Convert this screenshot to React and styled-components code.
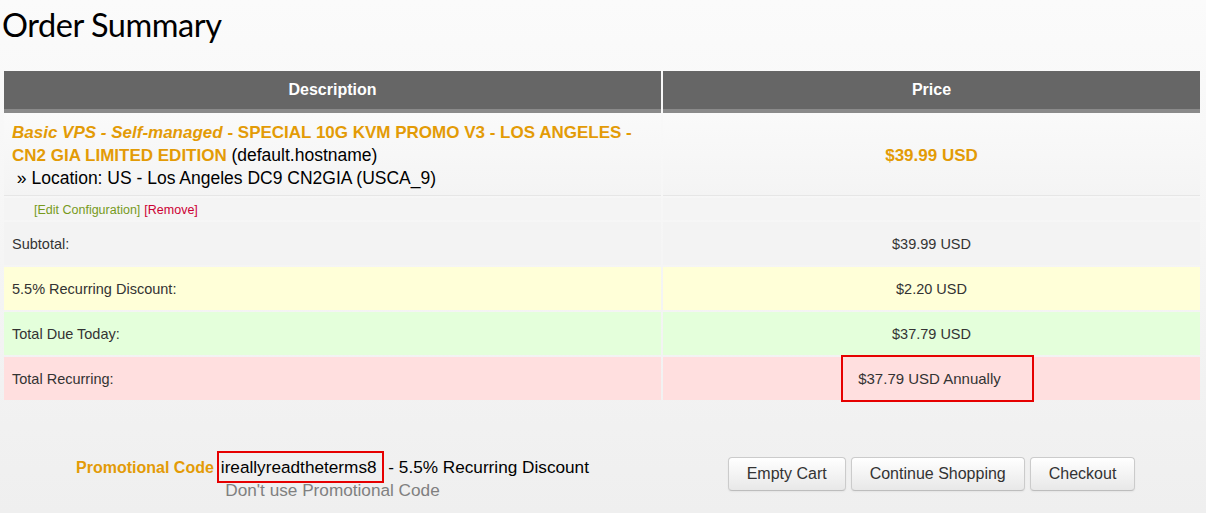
import React from 'react'
import styled, { createGlobalStyle } from 'styled-components'

const GlobalStyle = createGlobalStyle`
  html, body {
    margin: 0;
    min-height: 100%;
  }
  body {
    background: linear-gradient(#fbfbfb, #efefef) fixed;
    font-family: "Liberation Sans", Arial, sans-serif;
    color: #333;
  }
`;

const ORANGE = '#e39b06';

const tones = {
  item: 'linear-gradient(#fafafa, #f4f4f4)',
  plain: '#f4f4f4',
  sub: '#f3f3f3',
  discount: '#ffffd8',
  due: '#e4ffdb',
  recurring: '#ffdfdf',
};

const Page = styled.div`
  padding: 0 6px 0 4px;
`;

const Title = styled.h1`
  margin: 0 0 21px -2px;
  font-family: Lato, "Open Sans", sans-serif;
  font-weight: 400;
  font-size: 32.5px;
  letter-spacing: -0.45px;
  line-height: 50px;
  color: #000;
`;

const Row = styled.div`
  display: grid;
  grid-template-columns: 657px 537px;
  grid-template-rows: ${p => p.$h}px;
  column-gap: 2px;
`;

const HeadCell = styled.div`
  background: #666;
  border-bottom: 4px solid #8a8a8a;
  color: #fff;
  font-weight: bold;
  font-size: 16px;
  display: flex;
  align-items: center;
  justify-content: center;
`;

const Body = styled.div`
  display: flex;
  flex-direction: column;
  gap: 2px;
`;

const Cell = styled.div`
  min-height: 0;
  background: ${p => tones[p.$tone]};
  border-bottom: ${p => (p.$line ? '1px solid #e6e6e6' : 'none')};
  display: flex;
  align-items: center;
  justify-content: ${p => (p.$center ? 'center' : 'flex-start')};
  padding: ${p => p.$pad || '0 8px'};
  font-size: 14.5px;
  color: #333;
`;

const ItemText = styled.div`
  align-self: flex-start;
  font-size: 17px;
  line-height: 22px;
  color: #000;
`;

const Product = styled.span`
  color: ${ORANGE};
  font-weight: bold;
  em { font-style: italic; }
`;

const Plain = styled.span`
  font-size: 17.5px;
`;

const Price = styled.span`
  color: ${ORANGE};
  font-weight: bold;
  font-size: 17px;
`;

const SmallLink = styled.a`
  font-size: 12.5px;
  color: ${p => (p.$red ? '#cc0033' : '#779a1c')};
  text-decoration: none;
  margin-right: 4px;
`;

const Marked = styled.span`
  display: flex;
  align-items: center;
  flex-shrink: 0;
  box-sizing: border-box;
  height: 47px;
  margin-left: 12px;
  padding: 0 31px 0 15px;
  border: 2px solid #e60000;
  font-size: 15px;
`;

const Footer = styled.div`
  display: grid;
  grid-template-columns: 657px 537px;
  column-gap: 2px;
  margin-top: 56px;
`;

const Promo = styled.div`
  text-align: center;
  font-size: 17.2px;
  line-height: 23px;
  color: #000;
`;

const PromoLabel = styled.span`
  color: ${ORANGE};
  font-weight: bold;
  font-size: 16px;
`;

const Code = styled.span`
  margin-left: 3px;
  padding: 4px 5px 4px 2px;
  border: 2px solid #e60000;
`;

const Muted = styled.div`
  color: #808080;
`;

const Buttons = styled.div`
  display: flex;
  justify-content: center;
  gap: 5px;
  padding-top: 1px;
`;

const Button = styled.button`
  height: 34px;
  padding: 0 18px;
  border: 1px solid #cbcbcb;
  border-bottom-color: #bdbdbd;
  border-radius: 4px;
  background: linear-gradient(#ffffff, #e8e8e8);
  box-shadow: inset 0 1px 0 rgba(255, 255, 255, 0.4), 0 1px 2px rgba(0, 0, 0, 0.05);
  font-family: "Liberation Sans", Arial, sans-serif;
  font-size: 16px;
  color: #333;
  cursor: pointer;
`;

const totals = [
  { label: 'Subtotal:', value: '$39.99 USD', tone: 'sub' },
  { label: '5.5% Recurring Discount:', value: '$2.20 USD', tone: 'discount' },
  { label: 'Total Due Today:', value: '$37.79 USD', tone: 'due' },
]

const App = () => {
  return (
    <Page>
      <GlobalStyle />
      <Title>Order Summary</Title>

      <Row $h={42}>
        <HeadCell>Description</HeadCell>
        <HeadCell>Price</HeadCell>
      </Row>

      <Body>
        <Row $h={83}>
          <Cell $tone="item" $line $pad="9px 8px 8px">
            <ItemText>
              <Product><em>Basic VPS - Self-managed</em> - SPECIAL 10G KVM PROMO V3 - LOS ANGELES - CN2 GIA LIMITED EDITION</Product>{' '}
              <Plain>(default.hostname)</Plain>
              <br />
              <Plain>&nbsp;» Location: US - Los Angeles DC9 CN2GIA (USCA_9)</Plain>
            </ItemText>
          </Cell>
          <Cell $tone="item" $line $center $pad="3px 8px 0">
            <Price>$39.99 USD</Price>
          </Cell>
        </Row>

        <Row $h={22}>
          <Cell $tone="plain" $pad="2px 8px 0 30px">
            <SmallLink href="#">[Edit Configuration]</SmallLink>
            <SmallLink href="#" $red>[Remove]</SmallLink>
          </Cell>
          <Cell $tone="plain" />
        </Row>

        {totals.map(t => (
          <Row $h={43} key={t.label}>
            <Cell $tone={t.tone}>{t.label}</Cell>
            <Cell $tone={t.tone} $center>{t.value}</Cell>
          </Row>
        ))}

        <Row $h={43}>
          <Cell $tone="recurring">Total Recurring:</Cell>
          <Cell $tone="recurring" $center>
            <Marked>$37.79 USD Annually</Marked>
          </Cell>
        </Row>
      </Body>

      <Footer>
        <Promo>
          <PromoLabel>Promotional Code</PromoLabel>
          <Code>ireallyreadtheterms8</Code> - 5.5% Recurring Discount
          <Muted>Don't use Promotional Code</Muted>
        </Promo>
        <Buttons>
          <Button>Empty Cart</Button>
          <Button>Continue Shopping</Button>
          <Button>Checkout</Button>
        </Buttons>
      </Footer>
    </Page>
  )
}

export default App
